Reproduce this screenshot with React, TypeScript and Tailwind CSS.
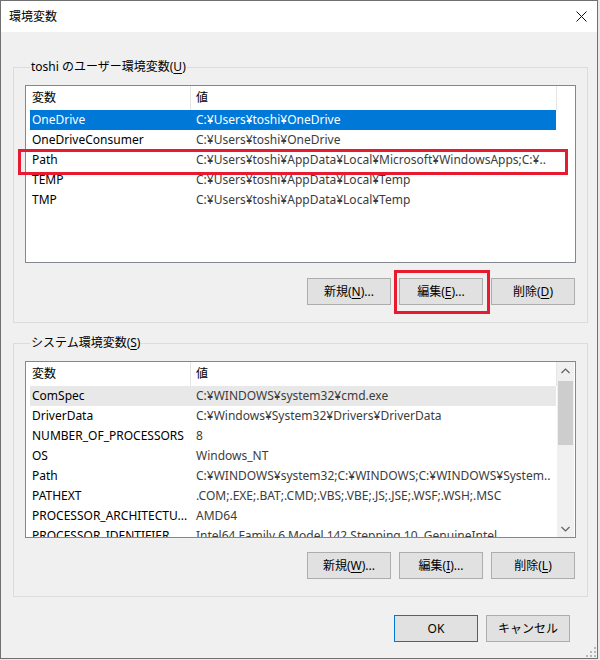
import React from "react";

const userVars: [string, string][] = [
  ["OneDrive", "C:¥Users¥toshi¥OneDrive"],
  ["OneDriveConsumer", "C:¥Users¥toshi¥OneDrive"],
  ["Path", "C:¥Users¥toshi¥AppData¥Local¥Microsoft¥WindowsApps;C:¥.."],
  ["TEMP", "C:¥Users¥toshi¥AppData¥Local¥Temp"],
  ["TMP", "C:¥Users¥toshi¥AppData¥Local¥Temp"],
];

const sysVars: [string, string][] = [
  ["ComSpec", "C:¥WINDOWS¥system32¥cmd.exe"],
  ["DriverData", "C:¥Windows¥System32¥Drivers¥DriverData"],
  ["NUMBER_OF_PROCESSORS", "8"],
  ["OS", "Windows_NT"],
  ["Path", "C:¥WINDOWS¥system32;C:¥WINDOWS;C:¥WINDOWS¥System.."],
  ["PATHEXT", ".COM;.EXE;.BAT;.CMD;.VBS;.VBE;.JS;.JSE;.WSF;.WSH;.MSC"],
  ["PROCESSOR_ARCHITECTU...", "AMD64"],
  ["PROCESSOR_IDENTIFIER", "Intel64 Family 6 Model 142 Stepping 10, GenuineIntel"],
];

function Btn({ children, primary }: { children: React.ReactNode; primary?: boolean }) {
  return (
    <div
      className={
        "w-[84px] h-[27px] flex items-center justify-center bg-[#e1e1e1] border text-[#000] " +
        (primary ? "border-[#0078d7]" : "border-[#adadad]")
      }
    >
      {children}
    </div>
  );
}

function Header() {
  return (
    <div className="h-[24px] flex shrink-0 bg-white">
      <div className="w-[165px] pl-[6px] flex items-center border-r border-[#e5e5e5]">変数</div>
      <div className="w-[366px] pl-[5px] flex items-center border-r border-[#e5e5e5]">値</div>
    </div>
  );
}

function Row({
  name,
  value,
  selected,
  hover,
}: {
  name: string;
  value: string;
  selected?: boolean;
  hover?: boolean;
}) {
  const bg = selected ? "bg-[#0078d7] text-white" : hover ? "bg-[#e8e8e8]" : "";
  return (
    <div className={"h-[20px] w-[526px] flex items-center shrink-0 " + bg}>
      <div className="w-[162px] pl-[2px] whitespace-nowrap overflow-hidden">{name}</div>
      <div
        className={
          "flex-1 pl-[4px] whitespace-nowrap overflow-hidden " + (selected ? "text-white" : "text-[#3c3c3c]")
        }
      >
        {value}
      </div>
    </div>
  );
}

function Legend({ children }: { children: React.ReactNode }) {
  return <legend className="ml-[5px] px-[1px] leading-[16px] text-[#000]">{children}</legend>;
}

export default function App() {
  return (
    <div
      className="relative w-[600px] h-[660px] bg-[#e9e9e9] text-[12px] text-black"
      style={{ fontFamily: '"Noto Sans", "Noto Sans CJK JP", sans-serif' }}
    >
      <div className="relative w-[598px] h-[659px] border border-[#707070] flex flex-col bg-[#f0f0f0]">
        {/* title bar */}
        <div className="h-[31px] bg-white flex items-center justify-between pl-[8px] pr-[9px] shrink-0">
          <span className="text-[12px]">環境変数</span>
          <svg width="11" height="11" viewBox="0 0 11 11" className="mr-[1px]">
            <path d="M0.5 0.5 L10.5 10.5 M10.5 0.5 L0.5 10.5" stroke="#111" strokeWidth="1" />
          </svg>
        </div>

        {/* body */}
        <div className="flex-1 flex flex-col pl-[12px] pr-[9px] pt-[27px]">
          <fieldset className="border border-[#dcdcdc] px-[11px] pb-[17px]">
            <Legend>
              toshi のユーザー環境変数(<u className="underline-offset-2">U</u>)
            </Legend>
            <div className="mt-[10px] h-[178px] border border-[#828790] bg-white flex flex-col overflow-hidden">
              <Header />
              <div className="pl-[4px] flex flex-col">
                {userVars.map(([n, v], i) => (
                  <Row key={n} name={n} value={v} selected={i === 0} />
                ))}
              </div>
            </div>
            <div className="mt-[15px] flex justify-end gap-[8px] pr-[1px]">
              <Btn>
                新規(<u className="underline-offset-2">N</u>)...
              </Btn>
              <Btn>
                編集(<u className="underline-offset-2">E</u>)...
              </Btn>
              <Btn>
                削除(<u className="underline-offset-2">D</u>)
              </Btn>
            </div>
          </fieldset>

          <fieldset className="mt-[12px] border border-[#dcdcdc] px-[11px] pb-[17px]">
            <Legend>
              システム環境変数(<u className="underline-offset-2">S</u>)
            </Legend>
            <div className="mt-[10px] h-[177px] border border-[#828790] bg-white flex overflow-hidden">
              <div className="w-[531px] flex flex-col overflow-hidden">
                <Header />
                <div className="pl-[4px] flex flex-col overflow-hidden">
                  {sysVars.map(([n, v], i) => (
                    <Row key={n + i} name={n} value={v} hover={i === 0} />
                  ))}
                </div>
              </div>
              <div className="w-[17px] bg-[#f0f0f0] flex flex-col">
                <div className="h-[17px] flex items-center justify-center">
                  <svg width="9" height="6" viewBox="0 0 9 6">
                    <path d="M0.5 5 L4.5 1 L8.5 5" stroke="#606060" strokeWidth="1.2" fill="none" />
                  </svg>
                </div>
                <div className="mt-[2px] mx-[1px] h-[64px] bg-[#cdcdcd]" />
                <div className="flex-1" />
                <div className="h-[17px] flex items-center justify-center">
                  <svg width="9" height="6" viewBox="0 0 9 6">
                    <path d="M0.5 1 L4.5 5 L8.5 1" stroke="#606060" strokeWidth="1.2" fill="none" />
                  </svg>
                </div>
              </div>
            </div>
            <div className="mt-[14px] flex justify-end gap-[8px] pr-[1px]">
              <Btn>
                新規(<u className="underline-offset-2">W</u>)...
              </Btn>
              <Btn>
                編集(<u className="underline-offset-2">I</u>)...
              </Btn>
              <Btn>
                削除(<u className="underline-offset-2">L</u>)
              </Btn>
            </div>
          </fieldset>

          <div className="mt-[18px] flex justify-end gap-[8px] pr-[18px]">
            <Btn primary>OK</Btn>
            <Btn>キャンセル</Btn>
          </div>
        </div>

        {/* size grip */}
        <svg width="10" height="10" viewBox="0 0 10 10" className="absolute right-[1px] bottom-[1px]">
          <rect x="8" y="0" width="2" height="2" fill="#b8b8b8" />
          <rect x="4" y="4" width="2" height="2" fill="#b8b8b8" />
          <rect x="8" y="4" width="2" height="2" fill="#b8b8b8" />
          <rect x="0" y="8" width="2" height="2" fill="#b8b8b8" />
          <rect x="4" y="8" width="2" height="2" fill="#b8b8b8" />
          <rect x="8" y="8" width="2" height="2" fill="#b8b8b8" />
        </svg>
      </div>

      {/* red annotation boxes */}
      <div className="absolute left-[18px] top-[149px] w-[550px] h-[26px] border-[3px] border-[#e81a2f]" />
      <div className="absolute left-[394px] top-[270px] w-[96px] h-[44px] border-[3px] border-[#e81a2f]" />
    </div>
  );
}
